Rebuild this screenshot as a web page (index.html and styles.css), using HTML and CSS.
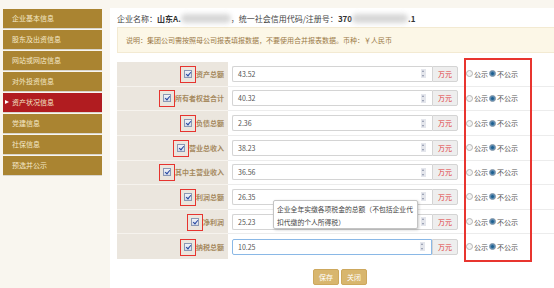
FILE: index.html
```html
<!DOCTYPE html>
<html lang="zh-CN">
<head>
  <meta charset="UTF-8">
  <title>资产状况信息</title>
  <link rel="stylesheet" href="styles.css">
</head>
<body>
<div class="page">
  <aside class="side">
    <a class="nav-item">企业基本信息</a>
    <a class="nav-item">股东及出资信息</a>
    <a class="nav-item">网站或网店信息</a>
    <a class="nav-item">对外投资信息</a>
    <a class="nav-item active">资产状况信息</a>
    <a class="nav-item">党建信息</a>
    <a class="nav-item">社保信息</a>
    <a class="nav-item">预选并公示</a>
  </aside>

  <main class="panel">
    <div class="company">企业名称：<b>山东A.</b><span class="blur blur-a"></span>，统一社会信用代码/注册号：<b>370</b><span class="blur blur-b"></span><b>.1</b></div>
    <div class="notice">说明：集团公司需按照母公司报表填报数据，不要使用合并报表数据。币种：￥人民币</div>

    <div class="form">
      <div class="label"><span class="chk"></span>资产总额</div>
      <div class="field"><div class="input"><span>43.52</span><i class="spin"></i></div><span class="unit">万元</span></div>
      <div class="pub"><span class="radio"></span>公示<span class="radio on"></span>不公示</div>

      <div class="label"><span class="chk"></span>所有者权益合计</div>
      <div class="field"><div class="input"><span>40.32</span><i class="spin"></i></div><span class="unit">万元</span></div>
      <div class="pub"><span class="radio"></span>公示<span class="radio on"></span>不公示</div>

      <div class="label"><span class="chk"></span>负债总额</div>
      <div class="field"><div class="input"><span>2.36</span><i class="spin"></i></div><span class="unit">万元</span></div>
      <div class="pub"><span class="radio"></span>公示<span class="radio on"></span>不公示</div>

      <div class="label"><span class="chk"></span>营业总收入</div>
      <div class="field"><div class="input"><span>38.23</span><i class="spin"></i></div><span class="unit">万元</span></div>
      <div class="pub"><span class="radio"></span>公示<span class="radio on"></span>不公示</div>

      <div class="label"><span class="chk"></span>其中主营业收入</div>
      <div class="field"><div class="input"><span>36.56</span><i class="spin"></i></div><span class="unit">万元</span></div>
      <div class="pub"><span class="radio"></span>公示<span class="radio on"></span>不公示</div>

      <div class="label"><span class="chk"></span>利润总额</div>
      <div class="field"><div class="input"><span>26.35</span><i class="spin"></i></div><span class="unit">万元</span></div>
      <div class="pub"><span class="radio"></span>公示<span class="radio on"></span>不公示</div>

      <div class="label"><span class="chk"></span>净利润</div>
      <div class="field"><div class="input"><span>25.23</span><i class="spin"></i></div><span class="unit">万元</span></div>
      <div class="pub"><span class="radio"></span>公示<span class="radio on"></span>不公示</div>

      <div class="label last"><span class="chk"></span>纳税总额</div>
      <div class="field last"><div class="input focus"><span>10.25</span><i class="spin"></i></div><span class="unit">万元</span></div>
      <div class="pub last"><span class="radio"></span>公示<span class="radio on"></span>不公示</div>

      <div class="mark-box"></div>
      <div class="tip">企业全年实缴各项税金的总额（不包括企业代扣代缴的个人所得税）</div>
    </div>

    <div class="actions">
      <button class="btn">保存</button>
      <button class="btn">关闭</button>
    </div>
  </main>
</div>
</body>
</html>
```

FILE: styles.css
```css
body {
  margin: 0;
  background: #f9f6ef;
  font-family: "Noto Sans CJK SC", "Noto Sans", sans-serif;
  font-size: 7px;
  color: #555;
}
.page {
  display: flex;
  height: 288px;
  overflow: hidden;
}
.side {
  width: 99px;
  padding: 9px 8px 0 3px;
  display: flex;
  flex-direction: column;
}
.nav-item {
  display: block;
  height: 19px;
  line-height: 19px;
  margin-bottom: 2px;
  padding-left: 9px;
  background: #aa8431;
  color: #f4e8c8;
  box-shadow: 0 1px 0 #d9d5cc;
}
.nav-item.active {
  background: #b11c20;
  position: relative;
}
.nav-item.active::before {
  content: "";
  position: absolute;
  left: 2px;
  top: 7px;
  border-left: 4px solid #fff;
  border-top: 2.5px solid transparent;
  border-bottom: 2.5px solid transparent;
}
.panel {
  flex: 1;
  margin-top: 8px;
  background: #fff;
  padding: 4px 0 0 7px;
}
.company {
  height: 14px;
  line-height: 14px;
  font-size: 8px;
  color: #444;
  white-space: nowrap;
}
.company b {
  color: #333;
}
.blur {
  display: inline-block;
  height: 9px;
  vertical-align: -1px;
  background: #d6d6d6;
  border-radius: 5px;
  filter: blur(2.5px);
}
.blur-a { width: 50px; }
.blur-b { width: 56px; }
.notice {
  margin-top: 1px;
  height: 24px;
  line-height: 24px;
  padding-left: 8px;
  background: #fcf7e7;
  border: 1px solid #f3ead2;
  border-right: none;
  color: #9b7a48;
  white-space: nowrap;
}
.form {
  position: relative;
  margin-top: 9px;
  height: 197px;
  display: grid;
  grid-template-columns: 111px 234px 1fr;
  grid-template-rows: repeat(8, 1fr);
}
.label {
  background: #ebe6de;
  border-bottom: 1px solid #f6f3ee;
  display: flex;
  align-items: center;
  justify-content: flex-end;
  padding-right: 4px;
  color: #a68a5e;
  font-weight: bold;
}
.field, .pub {
  border-bottom: 1px solid #ececec;
  display: flex;
  align-items: center;
}
.label.last, .field.last, .pub.last {
  border-bottom: none;
}
.chk {
  position: relative;
  width: 6px;
  height: 6px;
  margin-right: 4px;
  border: 1px solid #8b98b4;
  background: linear-gradient(#f0f3f8, #d3dae8);
}
.chk::before {
  content: "";
  position: absolute;
  left: 2px;
  top: 0;
  width: 2px;
  height: 4px;
  border: solid #2546a0;
  border-width: 0 1px 1px 0;
  transform: rotate(40deg);
}
.chk::after {
  content: "";
  position: absolute;
  left: -5px;
  top: -5px;
  right: -5px;
  bottom: -6px;
  border: 1.5px solid #e6342f;
}
.field {
  padding-left: 4px;
}
.input {
  width: 200px;
  height: 16px;
  box-sizing: border-box;
  border: 1px solid #d4d4d4;
  border-right: none;
  border-radius: 2px 0 0 2px;
  display: flex;
  align-items: center;
  justify-content: space-between;
  padding: 0 6px 0 5px;
  color: #555;
}
.input.focus {
  border: 1px solid #8ab8e6;
}
.spin {
  width: 5px;
  height: 9px;
  background: #e4e6ec;
  position: relative;
}
.spin::before, .spin::after {
  content: "";
  position: absolute;
  left: 1px;
  border-left: 1.5px solid transparent;
  border-right: 1.5px solid transparent;
}
.spin::before {
  top: 1px;
  border-bottom: 2px solid #8891a6;
}
.spin::after {
  bottom: 1px;
  border-top: 2px solid #8891a6;
}
.unit {
  width: 26px;
  height: 16px;
  box-sizing: border-box;
  line-height: 14px;
  text-align: center;
  background: #eeeeee;
  border: 1px solid #d4d4d4;
  border-radius: 0 2px 2px 0;
  color: #e03a3a;
}
.pub {
  padding-left: 4px;
  color: #555;
}
.radio {
  width: 5px;
  height: 5px;
  border-radius: 50%;
  border: 1px solid #b4b4b4;
  background: #f3f3f3;
  margin-right: 1px;
}
.radio.on {
  background: #1e5f8e;
  border-color: #9aa6b4;
  box-shadow: inset 0 0 0 1px #5b8cb4;
  margin-left: 1px;
}
.mark-box {
  position: absolute;
  left: 347px;
  top: -4px;
  width: 68px;
  height: 204px;
  box-sizing: border-box;
  border: 2px solid #e8352f;
}
.tip {
  position: absolute;
  left: 156px;
  top: 138px;
  width: 145px;
  height: 29px;
  box-sizing: border-box;
  padding: 2px 3px;
  font-size: 6.8px;
  line-height: 12.5px;
  background: #fff;
  border: 1px solid #c4c4c4;
  border-radius: 2px;
  box-shadow: 1px 1px 3px rgba(0, 0, 0, 0.2);
  color: #444;
}
.actions {
  display: flex;
  justify-content: center;
  gap: 2px;
  margin-top: 10px;
  padding-left: 9px;
}
.btn {
  width: 26px;
  height: 16px;
  padding: 0;
  border: 1px solid #cda85d;
  border-radius: 2px;
  background: #d8b66e;
  color: #fff;
  font-family: inherit;
  font-size: 7px;
}
```
